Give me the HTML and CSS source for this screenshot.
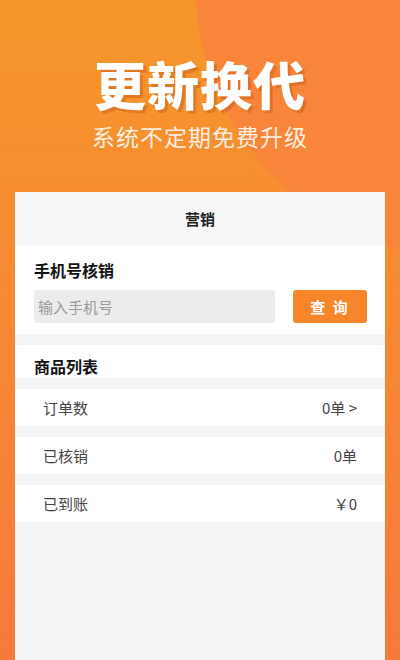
FILE: index.html
```html
<!DOCTYPE html>
<html lang="zh">
<head>
<meta charset="utf-8">
<link rel="stylesheet" href="styles.css">
</head>
<body>
<div class="screen">
  <div class="hero">
    <div class="hero-title">更新换代</div>
    <div class="hero-sub">系统不定期免费升级</div>
  </div>
  <div class="card">
    <div class="card-head">营销</div>
    <div class="section verify">
      <div class="sec-title">手机号核销</div>
      <div class="search">
        <div class="input">输入手机号</div>
        <div class="btn">查 询</div>
      </div>
    </div>
    <div class="section list-head">
      <div class="sec-title">商品列表</div>
    </div>
    <div class="row"><span>订单数</span><span>0单 &gt;</span></div>
    <div class="row"><span>已核销</span><span>0单</span></div>
    <div class="row"><span>已到账</span><span>￥0</span></div>
  </div>
</div>
</body>
</html>
```
FILE: styles.css
```css
html, body {
  margin: 0;
  padding: 0;
}
body {
  font-family: "Noto Sans CJK SC", "Noto Sans", sans-serif;
}
.screen {
  width: 400px;
  height: 660px;
  overflow: hidden;
  display: flex;
  flex-direction: column;
  background:
    radial-gradient(circle 275px at 470px -15px, #f8853a 99.5%, rgba(248,133,58,0) 100%),
    linear-gradient(180deg, #f5962b 0%, #f78a33 45%, #f8793c 100%);
}
.hero {
  height: 192px;
  display: flex;
  flex-direction: column;
  align-items: center;
  flex-shrink: 0;
}
.hero-title {
  margin-top: 51px;
  font-size: 52px;
  line-height: 66px;
  font-weight: 900;
  color: #ffffff;
  letter-spacing: 1px;
  text-shadow: 3px 3px 0 rgba(200, 90, 20, 0.45);
}
.hero-sub {
  margin-top: 5px;
  font-size: 23px;
  line-height: 28px;
  color: #fdefe0;
  letter-spacing: 1px;
}
.card {
  flex: 1;
  margin: 0 15px;
  background: #f4f4f4;
  display: flex;
  flex-direction: column;
}
.card-head {
  height: 53px;
  background: #f7f7f7;
  display: flex;
  align-items: center;
  justify-content: center;
  font-size: 15px;
  font-weight: 700;
  color: #222;
}
.section {
  background: #ffffff;
  padding: 0 18px 0 19px;
}
.verify {
  padding-top: 14px;
  padding-bottom: 11px;
  margin-bottom: 11px;
}
.sec-title {
  font-size: 16px;
  line-height: 22px;
  font-weight: 700;
  color: #111;
}
.search {
  margin-top: 9px;
  display: flex;
  justify-content: space-between;
}
.input {
  width: 237px;
  height: 33px;
  background: #ececec;
  border-radius: 3px;
  padding-left: 4px;
  display: flex;
  align-items: center;
  font-size: 15px;
  color: #9a9a9a;
}
.btn {
  width: 74px;
  height: 33px;
  background: #f7862b;
  border-radius: 3px;
  display: flex;
  align-items: center;
  justify-content: center;
  font-size: 15px;
  font-weight: 700;
  color: #ffffff;
  letter-spacing: 2px;
}
.list-head {
  height: 33px;
  display: flex;
  align-items: flex-end;
  margin-bottom: 11px;
}
.list-head .sec-title {
  line-height: 22px;
  margin-bottom: 1px;
}
.row {
  height: 37px;
  background: #ffffff;
  margin-bottom: 11px;
  display: flex;
  align-items: center;
  justify-content: space-between;
  padding: 0 28px 0 28px;
  font-size: 15px;
  color: #444;
}
```
